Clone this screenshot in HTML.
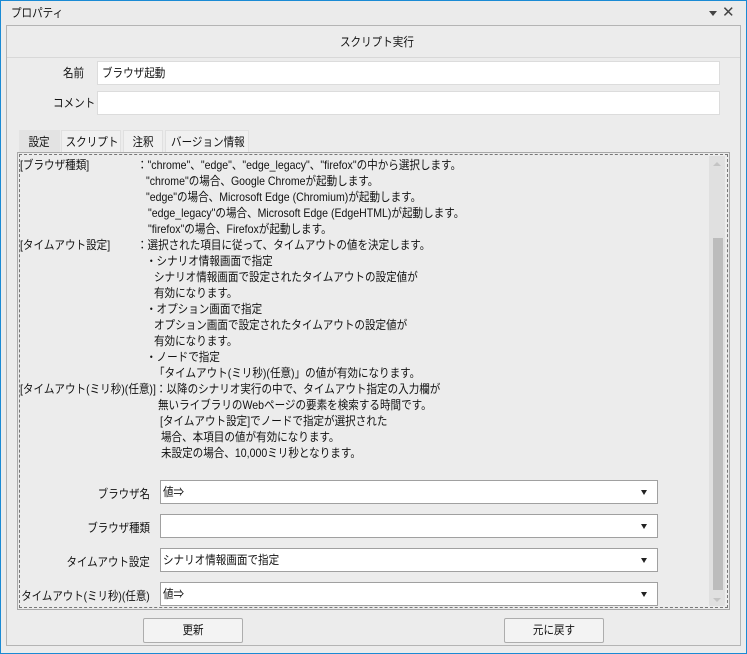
<!DOCTYPE html>
<html><head><meta charset="utf-8"><style>
*{box-sizing:border-box;margin:0;padding:0}
body{width:747px;height:654px;background:#ececec;font-family:"Liberation Sans","Noto Sans CJK JP",sans-serif;font-size:12px;color:#111;position:relative;overflow:hidden}
.a{position:absolute;white-space:nowrap}
.win{left:0;top:0;width:747px;height:654px;border:1px solid #1a8ad4}
.inp{background:#fff;border:1px solid #dcdcdc}
.sel{background:#fff;border:1px solid #a0a0a0}
.btn{border:1px solid #adadad;background:#f3f3f3;border-radius:2px;text-align:center;line-height:22px}
.tab{top:130px;height:22px;line-height:22px;text-align:center;background:#f0f0f0;border:1px solid #e0e0e0;border-bottom:none}
.t{line-height:16px;transform:scaleX(.88);transform-origin:0 0}
.r{transform:scaleX(.87);transform-origin:100% 0}
.s{display:inline-block;transform:scaleX(.88);transform-origin:50% 0}
</style></head><body>
<div class="a win"></div>
<div class="a" style="left:1px;top:1px;width:745px;height:24px;background:#ebebeb"></div>
<div class="a t" style="left:11px;top:5px">プロパティ</div>
<div class="a" style="left:709px;top:11px;width:0;height:0;border-left:4px solid transparent;border-right:4px solid transparent;border-top:5px solid #444"></div>
<div class="a" style="left:722px;top:3px;font-size:15px;color:#444">✕</div>
<div class="a" style="left:6px;top:25px;width:735px;height:621px;border:1px solid #b4b4b4;background:#ececec"></div>
<div class="a" style="left:7px;top:26px;width:733px;height:32px;background:#ececec;border-bottom:1px solid #d8d8d8"></div>
<div class="a t" style="left:340px;top:34px">スクリプト実行</div>
<div class="a t" style="left:63px;top:65px">名前</div>
<div class="a inp" style="left:97px;top:61px;width:623px;height:24px"></div>
<div class="a t" style="left:102px;top:65px">ブラウザ起動</div>
<div class="a t" style="left:53px;top:95px">コメント</div>
<div class="a inp" style="left:97px;top:91px;width:623px;height:24px"></div>
<div class="a tab" style="left:19px;width:41px;background:#e3e3e3;border-color:#e3e3e3"><span class="s">設定</span></div>
<div class="a tab" style="left:61px;width:60px"><span class="s">スクリプト</span></div>
<div class="a tab" style="left:123px;width:40px"><span class="s">注釈</span></div>
<div class="a tab" style="left:165px;width:84px"><span class="s">バージョン情報</span></div>
<div class="a" style="left:17px;top:152px;width:713px;height:458px;border:1px solid #a8a8a8"></div>
<div class="a" style="left:19px;top:154px;width:709px;height:454px;border:1px dashed #777"></div>
<div class="a" style="left:709px;top:156px;width:16px;height:450px;background:#e0e0e0"></div>
<div class="a" style="left:713px;top:238px;width:10px;height:352px;background:#bcbcbc"></div>
<div class="a" style="left:713px;top:162px;width:0;height:0;border-left:4px solid transparent;border-right:4px solid transparent;border-bottom:4px solid #c4c4c4"></div>
<div class="a" style="left:713px;top:598px;width:0;height:0;border-left:4px solid transparent;border-right:4px solid transparent;border-top:4px solid #c4c4c4"></div>
<div class="a t" style="left:20px;top:157px">[ブラウザ種類]</div>
<div class="a t" style="left:137px;top:157px">：&quot;chrome&quot;、&quot;edge&quot;、&quot;edge_legacy&quot;、&quot;firefox&quot;の中から選択します。</div>
<div class="a t" style="left:146px;top:173px">&quot;chrome&quot;の場合、Google Chromeが起動します。</div>
<div class="a t" style="left:146px;top:189px">&quot;edge&quot;の場合、Microsoft Edge (Chromium)が起動します。</div>
<div class="a t" style="left:148px;top:205px">&quot;edge_legacy&quot;の場合、Microsoft Edge (EdgeHTML)が起動します。</div>
<div class="a t" style="left:148px;top:221px">&quot;firefox&quot;の場合、Firefoxが起動します。</div>
<div class="a t" style="left:20px;top:237px">[タイムアウト設定]</div>
<div class="a t" style="left:137px;top:237px">：選択された項目に従って、タイムアウトの値を決定します。</div>
<div class="a t" style="left:146px;top:253px">・シナリオ情報画面で指定</div>
<div class="a t" style="left:154px;top:269px">シナリオ情報画面で設定されたタイムアウトの設定値が</div>
<div class="a t" style="left:154px;top:285px">有効になります。</div>
<div class="a t" style="left:146px;top:301px">・オプション画面で指定</div>
<div class="a t" style="left:154px;top:317px">オプション画面で設定されたタイムアウトの設定値が</div>
<div class="a t" style="left:154px;top:333px">有効になります。</div>
<div class="a t" style="left:146px;top:349px">・ノードで指定</div>
<div class="a t" style="left:154px;top:365px">「タイムアウト(ミリ秒)(任意)」の値が有効になります。</div>
<div class="a t" style="left:20px;top:381px">[タイムアウト(ミリ秒)(任意)]：以降のシナリオ実行の中で、タイムアウト指定の入力欄が</div>
<div class="a t" style="left:158px;top:397px">無いライブラリのWebページの要素を検索する時間です。</div>
<div class="a t" style="left:160px;top:413px">[タイムアウト設定]でノードで指定が選択された</div>
<div class="a t" style="left:161px;top:429px">場合、本項目の値が有効になります。</div>
<div class="a t" style="left:161px;top:445px">未設定の場合、10,000ミリ秒となります。</div>
<div class="a sel" style="left:160px;top:480px;width:498px;height:24px"></div>
<div class="a sel" style="left:160px;top:514px;width:498px;height:24px"></div>
<div class="a sel" style="left:160px;top:548px;width:498px;height:24px"></div>
<div class="a sel" style="left:160px;top:582px;width:498px;height:24px"></div>
<div class="a r" style="right:597px;top:485px">ブラウザ名</div>
<div class="a r" style="right:597px;top:519px">ブラウザ種類</div>
<div class="a r" style="right:597px;top:553px">タイムアウト設定</div>
<div class="a r" style="right:597px;top:587px">タイムアウト(ミリ秒)(任意)</div>
<div class="a t" style="left:163px;top:484px">値⇒</div>
<div class="a t" style="left:163px;top:552px">シナリオ情報画面で指定</div>
<div class="a t" style="left:163px;top:586px">値⇒</div>
<div class="a" style="left:641px;top:490px;border-left:3.5px solid transparent;border-right:3.5px solid transparent;border-top:5px solid #222"></div>
<div class="a" style="left:641px;top:524px;border-left:3.5px solid transparent;border-right:3.5px solid transparent;border-top:5px solid #222"></div>
<div class="a" style="left:641px;top:558px;border-left:3.5px solid transparent;border-right:3.5px solid transparent;border-top:5px solid #222"></div>
<div class="a" style="left:641px;top:592px;border-left:3.5px solid transparent;border-right:3.5px solid transparent;border-top:5px solid #222"></div>
<div class="a btn" style="left:143px;top:618px;width:100px;height:25px"><span class="s">更新</span></div>
<div class="a btn" style="left:504px;top:618px;width:100px;height:25px"><span class="s">元に戻す</span></div>
</body></html>
